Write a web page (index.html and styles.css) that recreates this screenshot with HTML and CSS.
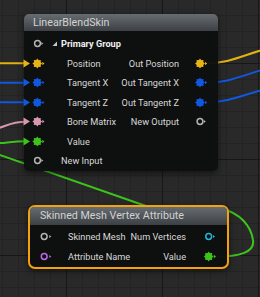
FILE: index.html
```html
<!DOCTYPE html>
<html lang="en">
<head>
  <meta charset="UTF-8">
  <title>Niagara Graph</title>
  <link rel="stylesheet" href="styles.css">
</head>
<body>

  <div class="graph">
    <svg class="wires" width="260" height="297" viewBox="0 0 260 297">
      <defs>
        <g id="gear">
          <circle r="3.6"/>
          <polygon points="5,0 3.14,1.3 3.54,3.54 1.3,3.14 0,5 -1.3,3.14 -3.54,3.54 -3.14,1.3 -5,0 -3.14,-1.3 -3.54,-3.54 -1.3,-3.14 0,-5 1.3,-3.14 3.54,-3.54 3.14,-1.3"/>
        </g>
      </defs>
      <!-- inputs of LinearBlendSkin -->
      <path class="w yellow" d="M-5,63.25 L26,63.25"/>
      <path class="w blue" d="M-5,82.75 L26,82.75"/>
      <path class="w blue" d="M-5,102.25 L26,102.25"/>
      <path class="w pink" d="M-10,130 C5,128 8,121.75 26,121.75"/>
      <path class="w green" d="M-10,143.5 C5,143.5 10,141.25 26,141.25"/>
      <!-- outputs going off to the right -->
      <path class="w yellow" d="M206,63.25 C235,63.25 245,52 300,40"/>
      <path class="w blue" d="M206,82.75 C235,82.75 245,72 300,60"/>
      <path class="w blue" d="M206,102.25 C235,102.25 245,92 300,80"/>
      <!-- Value of the attribute node, looping back to the left -->
      <path class="w green" d="M215,256.75 C240,256.75 255,252 253,240 C251,226 240,213 222,209 C205,206 180,218 143,205 L-20,148"/>
    </svg>

    <div class="node lbs">
      <div class="node-head">LinearBlendSkin</div>
      <div class="node-body">
        <div class="row">
          <div class="side in">
            <svg class="pin" viewBox="0 0 24 19"><circle class="ring" cx="13.5" cy="9.5" r="2.9" stroke="#b4b4b4"/><polygon points="17.3,8 19.3,9.5 17.3,11" fill="#b4b4b4"/></svg>
            <svg class="caret" width="6" height="6" viewBox="0 0 6 6"><polygon points="5,0.5 5,5 0.5,5" fill="#c8c8c8"/></svg>
            <span class="label group">Primary Group</span>
          </div>
        </div>
        <div class="row">
          <div class="side in">
            <svg class="pin" viewBox="0 0 24 19" fill="#e6b414"><polygon points="-0.5,5.5 6,9.5 -0.5,13.5"/><use href="#gear" x="13.3" y="9.5"/><polygon points="18.3,7.8 20.5,9.5 18.3,11.2"/></svg>
            <span class="label">Position</span>
          </div>
          <div class="side out">
            <span class="label">Out Position</span>
            <svg class="pin" viewBox="0 0 24 19" fill="#e6b414"><use href="#gear" x="6" y="9.5"/><polygon points="11,7.8 13.2,9.5 11,11.2"/></svg>
          </div>
        </div>
        <div class="row">
          <div class="side in">
            <svg class="pin" viewBox="0 0 24 19" fill="#1058de"><polygon points="-0.5,5.5 6,9.5 -0.5,13.5"/><use href="#gear" x="13.3" y="9.5"/><polygon points="18.3,7.8 20.5,9.5 18.3,11.2"/></svg>
            <span class="label">Tangent X</span>
          </div>
          <div class="side out">
            <span class="label">Out Tangent X</span>
            <svg class="pin" viewBox="0 0 24 19" fill="#1058de"><use href="#gear" x="6" y="9.5"/><polygon points="11,7.8 13.2,9.5 11,11.2"/></svg>
          </div>
        </div>
        <div class="row">
          <div class="side in">
            <svg class="pin" viewBox="0 0 24 19" fill="#1058de"><polygon points="-0.5,5.5 6,9.5 -0.5,13.5"/><use href="#gear" x="13.3" y="9.5"/><polygon points="18.3,7.8 20.5,9.5 18.3,11.2"/></svg>
            <span class="label">Tangent Z</span>
          </div>
          <div class="side out">
            <span class="label">Out Tangent Z</span>
            <svg class="pin" viewBox="0 0 24 19" fill="#1058de"><use href="#gear" x="6" y="9.5"/><polygon points="11,7.8 13.2,9.5 11,11.2"/></svg>
          </div>
        </div>
        <div class="row">
          <div class="side in">
            <svg class="pin" viewBox="0 0 24 19" fill="#d996b0"><polygon points="-0.5,5.5 6,9.5 -0.5,13.5"/><use href="#gear" x="13.3" y="9.5"/><polygon points="18.3,7.8 20.5,9.5 18.3,11.2"/></svg>
            <span class="label">Bone Matrix</span>
          </div>
          <div class="side out">
            <span class="label">New Output</span>
            <svg class="pin" viewBox="0 0 24 19"><circle class="ring" cx="6" cy="9.5" r="2.9" stroke="#b4b4b4"/><polygon points="9.8,8 11.8,9.5 9.8,11" fill="#b4b4b4"/></svg>
          </div>
        </div>
        <div class="row">
          <div class="side in">
            <svg class="pin" viewBox="0 0 24 19" fill="#3cc41c"><polygon points="-0.5,5.5 6,9.5 -0.5,13.5"/><use href="#gear" x="13.3" y="9.5"/><polygon points="18.3,7.8 20.5,9.5 18.3,11.2"/></svg>
            <span class="label">Value</span>
          </div>
        </div>
        <div class="row">
          <div class="side in">
            <svg class="pin" viewBox="0 0 24 19"><circle class="ring" cx="13.5" cy="9.5" r="2.9" stroke="#b4b4b4"/><polygon points="17.3,8 19.3,9.5 17.3,11" fill="#b4b4b4"/></svg>
            <span class="label short">New Input</span>
          </div>
        </div>
      </div>
    </div>

    <div class="node smva">
      <div class="node-head">Skinned Mesh Vertex Attribute</div>
      <div class="node-body">
        <div class="row">
          <div class="side in">
            <svg class="pin" viewBox="0 0 24 19"><circle class="ring" cx="14.2" cy="9.5" r="2.9" stroke="#b4b4b4"/><polygon points="19.3,8 21.3,9.5 19.3,11" fill="#b4b4b4"/></svg>
            <span class="label">Skinned Mesh</span>
          </div>
          <div class="side out">
            <span class="label">Num Vertices</span>
            <svg class="pin" viewBox="0 0 24 19"><circle class="ring" cx="5.7" cy="9.5" r="2.9" stroke="#22b6d6"/><polygon points="10,8 12,9.5 10,11" fill="#22b6d6"/></svg>
          </div>
        </div>
        <div class="row">
          <div class="side in">
            <svg class="pin" viewBox="0 0 24 19"><circle class="ring" cx="14.2" cy="9.5" r="2.9" stroke="#b86ae6"/><polygon points="19.3,8 21.3,9.5 19.3,11" fill="#b86ae6"/></svg>
            <span class="label">Attribute Name</span>
          </div>
          <div class="side out">
            <span class="label">Value</span>
            <svg class="pin" viewBox="0 0 24 19" fill="#3cc41c"><use href="#gear" x="5.7" y="9.5"/><polygon points="10.8,7.8 13,9.5 10.8,11.2"/></svg>
          </div>
        </div>
      </div>
    </div>
  </div>

</body>
</html>
```
FILE: styles.css
```css
body {
  margin: 0;
  width: 260px;
  height: 297px;
  overflow: hidden;
  font-family: Roboto, "Liberation Sans", sans-serif;
  background-color: #292929;
  background-image:
    linear-gradient(to right, #171717 1px, transparent 1px),
    linear-gradient(to bottom, #171717 1px, transparent 1px),
    linear-gradient(to right, #232323 1px, transparent 1px),
    linear-gradient(to bottom, #232323 1px, transparent 1px);
  background-size: 96px 96px, 96px 96px, 16px 16px, 16px 16px;
  background-position: 66px 0, 0 63px, 2px 0, 0 15px;
}

.graph {
  position: relative;
  width: 260px;
  height: 297px;
}

.wires {
  position: absolute;
  left: 0;
  top: 0;
}

.w {
  fill: none;
  stroke-width: 2;
}

.yellow { stroke: #e2b214; }
.blue { stroke: #1058de; }
.pink { stroke: #d996b0; }
.green { stroke: #3cc41c; }

/* nodes sit on a free canvas */
.node {
  position: absolute;
  box-sizing: border-box;
  background: rgba(13, 14, 14, 0.97);
  box-shadow: 0 2px 6px rgba(0, 0, 0, 0.55);
}

.node-head {
  color: #d2d2d2;
  font-size: 10.7px;
  white-space: nowrap;
  background: linear-gradient(#676c71, #3c4044);
}

.lbs {
  left: 24px;
  top: 14px;
  width: 194px;
  height: 157px;
  border-radius: 5px;
}

.lbs .node-head {
  height: 17px;
  line-height: 17px;
  padding-left: 9px;
  border-radius: 5px 5px 0 0;
}

.lbs .node-body {
  padding-top: 3px;
}

.smva {
  left: 28px;
  top: 205px;
  width: 201px;
  height: 64px;
  border: 2px solid #f2a20e;
  border-radius: 7px;
}

.smva .node-head {
  height: 18px;
  line-height: 18px;
  padding-left: 10px;
  border-radius: 4px 4px 0 0;
}

.smva .node-body {
  padding-top: 1px;
}

.row {
  display: flex;
  align-items: center;
  justify-content: space-between;
  height: 19.5px;
  font-size: 9.2px;
  color: #d8d8d8;
  white-space: nowrap;
}

.smva .row {
  height: 20.5px;
}

.side {
  display: flex;
  align-items: center;
}

.pin {
  display: block;
  flex: none;
  width: 24px;
  height: 19px;
  overflow: visible;
}

.ring {
  fill: none;
  stroke-width: 1.5;
}

.caret {
  display: block;
  flex: none;
  margin-left: 4px;
}

.in .label {
  margin-left: 19px;
}

.in .label.short {
  margin-left: 13px;
}

.in .label.group {
  margin-left: 3px;
  font-weight: bold;
  color: #f0f0f0;
}

.out .label {
  margin-right: 15px;
}

.smva .in .label {
  margin-left: 14px;
}

.smva .out .label {
  margin-right: 17px;
}
```
